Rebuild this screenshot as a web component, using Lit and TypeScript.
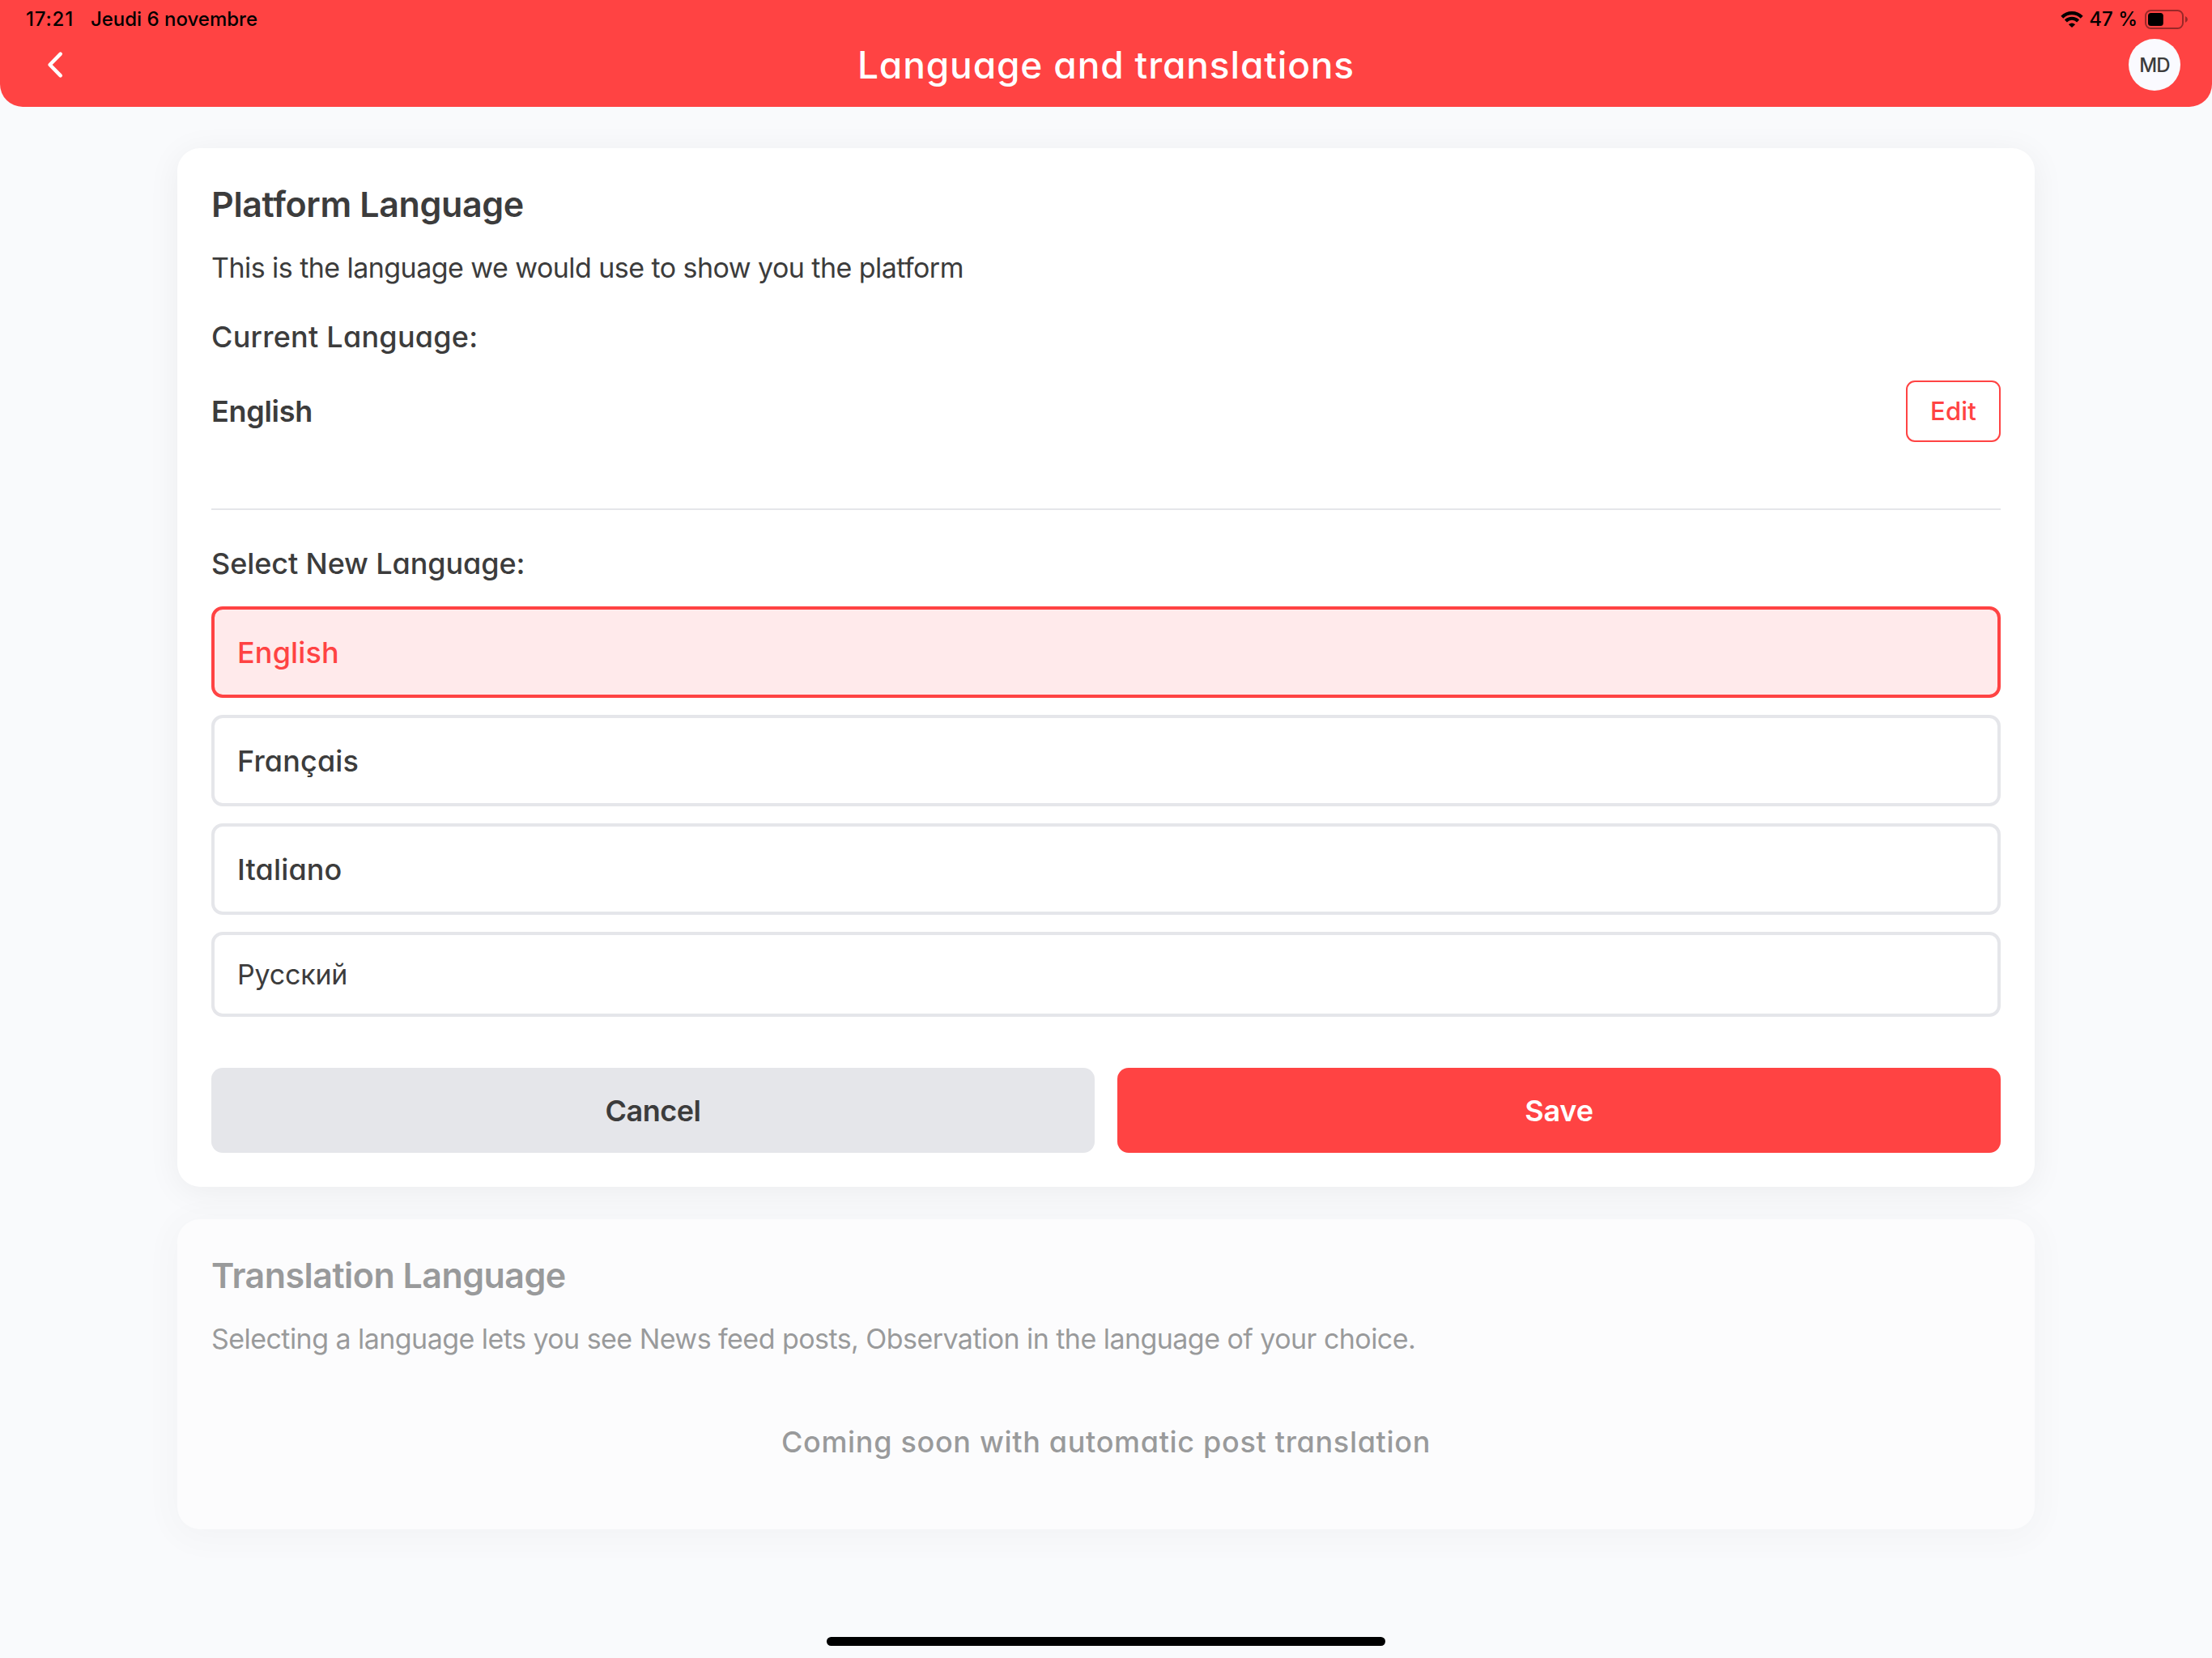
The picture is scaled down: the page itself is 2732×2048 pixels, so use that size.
import { LitElement, html, css } from 'lit';
import { customElement, property, state } from 'lit/decorators.js';
import { classMap } from 'lit/directives/class-map.js';

interface Language {
  code: string;
  label: string;
}

const LANGUAGES: Language[] = [
  { code: 'en', label: 'English' },
  { code: 'fr', label: 'Français' },
  { code: 'it', label: 'Italiano' },
  { code: 'ru', label: 'Русский' },
];

@customElement('status-bar')
export class StatusBar extends LitElement {
  @property() time = '';
  @property() date = '';
  @property({ type: Number }) battery = 0;

  static styles = css`
    :host {
      display: flex;
      align-items: center;
      box-sizing: border-box;
      height: 48px;
      padding: 0 30px 0 32px;
      font-size: 24px;
      font-weight: 500;
      line-height: 30px;
      color: #000;
    }

    .time {
      letter-spacing: 0.8px;
      margin-right: 21px;
    }

    .date {
      flex: 1;
    }

    .wifi {
      width: 28px;
      height: 20px;
      margin-right: 7px;
    }

    .level {
      margin-right: 9px;
    }

    .battery {
      width: 53px;
      height: 24px;
    }
  `;

  render() {
    return html`
      <span class="time">${this.time}</span>
      <span class="date">${this.date}</span>
      <svg class="wifi" viewBox="0 0 28 20">
        <g fill="none" stroke="#000" stroke-width="4.2">
          <path d="M1.8 7.2 A17.3 17.3 0 0 1 26.2 7.2" />
          <path d="M6.4 11.9 A10.8 10.8 0 0 1 21.6 11.9" />
        </g>
        <path d="M14 20 L9.9 16.2 A5.9 5.9 0 0 1 18.1 16.2 Z" />
      </svg>
      <span class="level">${this.battery} %</span>
      <svg class="battery" viewBox="0 0 53 24">
        <rect x="1" y="1" width="46" height="22" rx="6.5" fill="none" stroke="#000" stroke-opacity="0.4" stroke-width="2" />
        <rect x="4" y="4" width=${(40 * this.battery) / 100} height="16" rx="3.5" />
        <path d="M50 8 Q53 9.5 53 12 Q53 14.5 50 16 Z" fill-opacity="0.4" />
      </svg>
    `;
  }
}

@customElement('app-root')
export class AppRoot extends LitElement {
  @state() selected = 'en';

  static styles = css`
    :host {
      display: flex;
      flex-direction: column;
      box-sizing: border-box;
      height: 2048px;
      overflow: hidden;
      background: #f9fafc;
      color: #3c3c3c;
      font-family: Inter, "Liberation Sans", sans-serif;
    }

    h1, h2, p {
      margin: 0;
    }

    button {
      box-sizing: border-box;
      margin: 0;
      padding: 0;
      border: none;
      background: none;
      color: inherit;
      font: inherit;
    }

    .header {
      height: 132px;
      border-radius: 0 0 28px 28px;
      background: #ff4343;
    }

    .nav {
      display: grid;
      grid-template-columns: 1fr auto 1fr;
      align-items: center;
      height: 64px;
      padding: 0 39px;
    }

    .back {
      display: flex;
      width: 34px;
      height: 34px;
      margin-left: 13px;
    }

    .title {
      color: #fff;
      font-size: 46px;
      font-weight: 500;
      line-height: 64px;
      letter-spacing: 0.87px;
      font-feature-settings: "cv11";
    }

    .avatar {
      justify-self: end;
      width: 64px;
      height: 64px;
      border-radius: 50%;
      background: #fafaff;
      font-size: 24px;
      font-weight: 500;
      line-height: 65px;
      letter-spacing: -0.9px;
      text-align: center;
    }

    .content {
      display: flex;
      flex-direction: column;
      flex: 1;
      gap: 40px;
      padding: 51px 219px 0;
    }

    .card {
      padding: 42px;
      border-radius: 28px;
      background: #fff;
      box-shadow: 0 6px 42px rgba(0, 0, 0, 0.06);
    }

    .card.disabled {
      opacity: 0.5;
    }

    .card h2 {
      font-size: 43px;
      font-weight: 600;
      line-height: 54px;
      letter-spacing: -0.36px;
    }

    .card.disabled h2 {
      letter-spacing: -0.54px;
    }

    .description {
      margin-top: 27px;
      font-size: 34px;
      line-height: 50px;
      letter-spacing: -0.55px;
    }

    .label {
      font-size: 36px;
      font-weight: 500;
      line-height: 52px;
      font-feature-settings: "cv11";
    }

    .label.current {
      margin-top: 34px;
      letter-spacing: 0.25px;
    }

    .label.select {
      margin-top: 40px;
      letter-spacing: -0.1px;
    }

    .label.soon {
      margin: 76px 0 40px;
      text-align: center;
      letter-spacing: 0.68px;
    }

    .row {
      display: flex;
      align-items: center;
      justify-content: space-between;
      height: 76px;
      margin-top: 28px;
      font-size: 36px;
      font-weight: 600;
      letter-spacing: -0.3px;
    }

    .edit {
      width: 117px;
      height: 76px;
      padding-bottom: 2px;
      border: 2px solid #ff4343;
      border-radius: 11px;
      color: #ff4343;
      font-size: 31px;
      font-weight: 500;
      letter-spacing: 0.2px;
    }

    .divider {
      height: 2px;
      margin-top: 82px;
      background: #e5e6ea;
    }

    .options {
      display: flex;
      flex-direction: column;
      gap: 21px;
      margin-top: 27px;
    }

    .option {
      height: 113px;
      padding: 0 28px;
      border: 4px solid #e5e6ea;
      border-radius: 14px;
      font-size: 36px;
      font-weight: 500;
      letter-spacing: 0.15px;
      text-align: left;
      font-feature-settings: "cv11";
    }

    .option.cyrillic {
      height: 105px;
      font-size: 34px;
      font-weight: 400;
      letter-spacing: -0.2px;
    }

    .option.selected {
      border-color: #ff4343;
      background: #ffeaeb;
      color: #ff4343;
    }

    .actions {
      display: grid;
      grid-template-columns: 1fr 1fr;
      gap: 28px;
      margin-top: 63px;
    }

    .action {
      height: 105px;
      border-radius: 14px;
      background: #e5e6ea;
      font-size: 36px;
      font-weight: 600;
      letter-spacing: -0.5px;
    }

    .action.primary {
      background: #ff4343;
      color: #fff;
      letter-spacing: -0.2px;
    }

    .home {
      align-self: center;
      width: 690px;
      height: 11px;
      margin-bottom: 15px;
      border-radius: 6px;
      background: #000;
    }
  `;

  select(code: string) {
    this.selected = code;
  }

  renderOption(language: Language) {
    const classes = {
      option: true,
      selected: language.code === this.selected,
      cyrillic: language.code === 'ru',
    };
    return html`
      <button class=${classMap(classes)} @click=${() => this.select(language.code)}>${language.label}</button>
    `;
  }

  render() {
    return html`
      <header class="header">
        <status-bar time="17:21" date="Jeudi 6 novembre" battery="47"></status-bar>
        <div class="nav">
          <button class="back" aria-label="Back">
            <svg width="34" height="34" viewBox="0 0 34 34" fill="none" stroke="#fff" stroke-width="4.6" stroke-linecap="round" stroke-linejoin="round">
              <path d="M22.7 3.7 L9.6 17 L22.7 30.3" />
            </svg>
          </button>
          <h1 class="title">Language and translations</h1>
          <div class="avatar">MD</div>
        </div>
      </header>

      <main class="content">
        <section class="card">
          <h2>Platform Language</h2>
          <p class="description">This is the language we would use to show you the platform</p>
          <p class="label current">Current Language:</p>
          <div class="row">
            <span>English</span>
            <button class="edit">Edit</button>
          </div>
          <div class="divider"></div>
          <p class="label select">Select New Language:</p>
          <div class="options">${LANGUAGES.map((language) => this.renderOption(language))}</div>
          <div class="actions">
            <button class="action">Cancel</button>
            <button class="action primary">Save</button>
          </div>
        </section>

        <section class="card disabled">
          <h2>Translation Language</h2>
          <p class="description">
            Selecting a language lets you see News feed posts, Observation in the language of your choice.
          </p>
          <p class="label soon">Coming soon with automatic post translation</p>
        </section>
      </main>

      <div class="home"></div>
    `;
  }
}
